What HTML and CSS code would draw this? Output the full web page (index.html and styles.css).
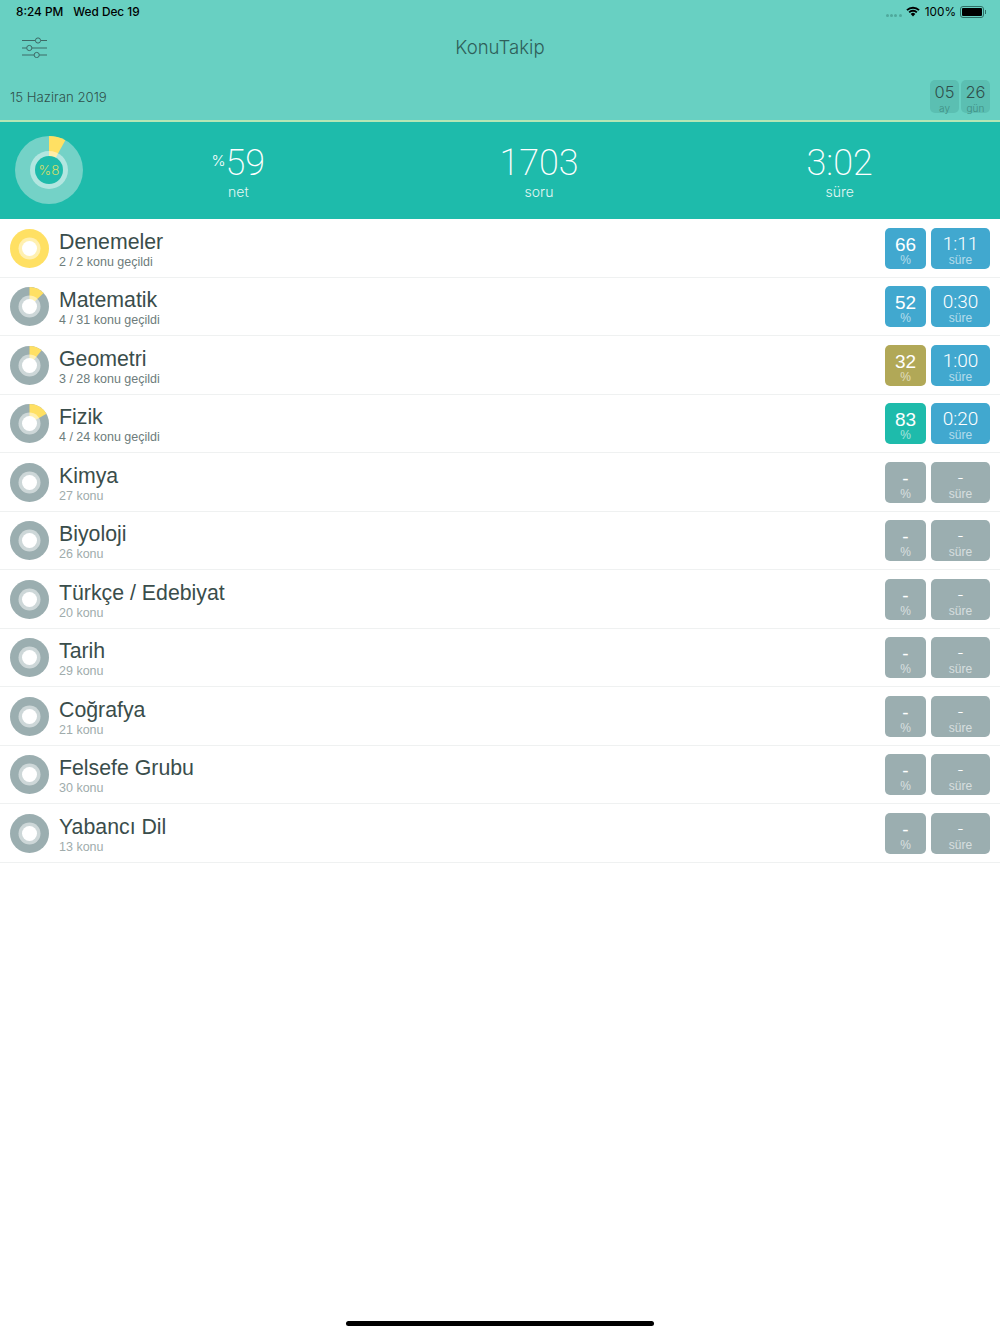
FILE: index.html
```html
<!DOCTYPE html>
<html lang="tr">
<head>
    <meta charset="UTF-8">
    <meta name="viewport" content="width=device-width, initial-scale=1.0">
    <title>KonuTakip</title>
    <link rel="stylesheet" href="styles.css">
</head>
<body>
    <header class="top">
        <div class="status">
            <span class="status-time">8:24 PM</span>
            <span class="status-date">Wed Dec 19</span>
            <span class="status-right">
                <span class="dots"><i></i><i></i><i></i><i></i></span>
                <svg class="wifi" width="14" height="11" viewBox="0 0 14 11">
                    <path d="M0.3 3.4A9.6 9.6 0 0 1 13.7 3.4L12.4 4.8A7.8 7.8 0 0 0 1.6 4.8Z"/>
                    <path d="M2.5 5.7A6.4 6.4 0 0 1 11.5 5.7L10.2 7A4.6 4.6 0 0 0 3.8 7Z"/>
                    <path d="M4.7 8A3.2 3.2 0 0 1 9.3 8L7 10.6Z"/>
                </svg>
                <span class="battery-text">100%</span>
                <span class="battery"><b></b></span><span class="battery-tip"></span>
            </span>
        </div>
        <div class="nav">
            <svg class="filter-icon" width="25" height="22" viewBox="0 0 25 22">
                <path d="M0 4.5H13.3M18.7 4.5H25M0 12H4.6M10 12H25M0 19H12M17.4 19H25"/>
                <circle cx="16" cy="4.5" r="2.6"/>
                <circle cx="7.3" cy="12" r="2.6"/>
                <circle cx="14.7" cy="19" r="2.6"/>
            </svg>
            <h1 class="app-title">KonuTakip</h1>
        </div>
        <div class="date-row">
            <span class="exam-date">15 Haziran 2019</span>
            <div class="countdown">
                <div class="count-box"><span class="count-num">05</span><span class="count-unit">ay</span></div>
                <div class="count-box"><span class="count-num">26</span><span class="count-unit">gün</span></div>
            </div>
        </div>
    </header>

    <section class="summary">
        <div class="summary-ring">
            <svg width="68" height="68" viewBox="0 0 68 68">
                <circle cx="34" cy="34" r="34" fill="#74d2c7"/>
                <circle cx="34" cy="34" r="17" fill="none" stroke="#ffe063" stroke-width="34" pathLength="100" stroke-dasharray="8 92" transform="rotate(-90 34 34)"/>
                <circle cx="34" cy="34" r="19" fill="#fff" fill-opacity="0.45"/>
                <circle cx="34" cy="34" r="14" fill="#1ebbab"/>
            </svg>
            <span class="summary-ring-text">%8</span>
        </div>
        <div class="stat"><div class="stat-num"><small>%</small>59</div><div class="stat-label">net</div></div>
        <div class="stat"><div class="stat-num">1703</div><div class="stat-label">soru</div></div>
        <div class="stat"><div class="stat-num">3:02</div><div class="stat-label">süre</div></div>
    </section>

    <ul class="lessons">
        <li class="lesson">
            <svg class="ring" width="39" height="39" viewBox="0.5 0.5 39 39">
                <circle cx="20" cy="20" r="19.5" fill="#ffe063"/>
                <circle class="ring-pale" cx="20" cy="20" r="11"/><circle class="ring-hole" cx="20" cy="20" r="7.5"/>
            </svg>
            <div class="lesson-text"><div class="lesson-name">Denemeler</div><div class="lesson-sub done">2 / 2 konu geçildi</div></div>
            <div class="badge pct blue"><span class="badge-num">66</span><span class="badge-unit">%</span></div>
            <div class="badge time blue"><span class="badge-num">1:11</span><span class="badge-unit">süre</span></div>
        </li>
        <li class="lesson">
            <svg class="ring" width="39" height="39" viewBox="0.5 0.5 39 39">
                <circle cx="20" cy="20" r="19.5" fill="#9baeb0"/>
                <circle class="ring-part" cx="20" cy="20" r="9.75" pathLength="100" stroke-dasharray="12.9 87.1" transform="rotate(-90 20 20)"/>
                <circle class="ring-pale" cx="20" cy="20" r="11"/><circle class="ring-hole" cx="20" cy="20" r="7.5"/>
            </svg>
            <div class="lesson-text"><div class="lesson-name">Matematik</div><div class="lesson-sub done">4 / 31 konu geçildi</div></div>
            <div class="badge pct blue"><span class="badge-num">52</span><span class="badge-unit">%</span></div>
            <div class="badge time blue"><span class="badge-num">0:30</span><span class="badge-unit">süre</span></div>
        </li>
        <li class="lesson">
            <svg class="ring" width="39" height="39" viewBox="0.5 0.5 39 39">
                <circle cx="20" cy="20" r="19.5" fill="#9baeb0"/>
                <circle class="ring-part" cx="20" cy="20" r="9.75" pathLength="100" stroke-dasharray="10.7 89.3" transform="rotate(-90 20 20)"/>
                <circle class="ring-pale" cx="20" cy="20" r="11"/><circle class="ring-hole" cx="20" cy="20" r="7.5"/>
            </svg>
            <div class="lesson-text"><div class="lesson-name">Geometri</div><div class="lesson-sub done">3 / 28 konu geçildi</div></div>
            <div class="badge pct gold"><span class="badge-num">32</span><span class="badge-unit">%</span></div>
            <div class="badge time blue"><span class="badge-num">1:00</span><span class="badge-unit">süre</span></div>
        </li>
        <li class="lesson">
            <svg class="ring" width="39" height="39" viewBox="0.5 0.5 39 39">
                <circle cx="20" cy="20" r="19.5" fill="#9baeb0"/>
                <circle class="ring-part" cx="20" cy="20" r="9.75" pathLength="100" stroke-dasharray="16.7 83.3" transform="rotate(-90 20 20)"/>
                <circle class="ring-pale" cx="20" cy="20" r="11"/><circle class="ring-hole" cx="20" cy="20" r="7.5"/>
            </svg>
            <div class="lesson-text"><div class="lesson-name">Fizik</div><div class="lesson-sub done">4 / 24 konu geçildi</div></div>
            <div class="badge pct teal"><span class="badge-num">83</span><span class="badge-unit">%</span></div>
            <div class="badge time blue"><span class="badge-num">0:20</span><span class="badge-unit">süre</span></div>
        </li>
        <li class="lesson">
            <svg class="ring" width="39" height="39" viewBox="0.5 0.5 39 39">
                <circle cx="20" cy="20" r="19.5" fill="#9baeb0"/>
                <circle class="ring-pale" cx="20" cy="20" r="11"/><circle class="ring-hole" cx="20" cy="20" r="7.5"/>
            </svg>
            <div class="lesson-text"><div class="lesson-name">Kimya</div><div class="lesson-sub">27 konu</div></div>
            <div class="badge pct"><span class="badge-num">-</span><span class="badge-unit">%</span></div>
            <div class="badge time"><span class="badge-num">-</span><span class="badge-unit">süre</span></div>
        </li>
        <li class="lesson">
            <svg class="ring" width="39" height="39" viewBox="0.5 0.5 39 39">
                <circle cx="20" cy="20" r="19.5" fill="#9baeb0"/>
                <circle class="ring-pale" cx="20" cy="20" r="11"/><circle class="ring-hole" cx="20" cy="20" r="7.5"/>
            </svg>
            <div class="lesson-text"><div class="lesson-name">Biyoloji</div><div class="lesson-sub">26 konu</div></div>
            <div class="badge pct"><span class="badge-num">-</span><span class="badge-unit">%</span></div>
            <div class="badge time"><span class="badge-num">-</span><span class="badge-unit">süre</span></div>
        </li>
        <li class="lesson">
            <svg class="ring" width="39" height="39" viewBox="0.5 0.5 39 39">
                <circle cx="20" cy="20" r="19.5" fill="#9baeb0"/>
                <circle class="ring-pale" cx="20" cy="20" r="11"/><circle class="ring-hole" cx="20" cy="20" r="7.5"/>
            </svg>
            <div class="lesson-text"><div class="lesson-name">Türkçe / Edebiyat</div><div class="lesson-sub">20 konu</div></div>
            <div class="badge pct"><span class="badge-num">-</span><span class="badge-unit">%</span></div>
            <div class="badge time"><span class="badge-num">-</span><span class="badge-unit">süre</span></div>
        </li>
        <li class="lesson">
            <svg class="ring" width="39" height="39" viewBox="0.5 0.5 39 39">
                <circle cx="20" cy="20" r="19.5" fill="#9baeb0"/>
                <circle class="ring-pale" cx="20" cy="20" r="11"/><circle class="ring-hole" cx="20" cy="20" r="7.5"/>
            </svg>
            <div class="lesson-text"><div class="lesson-name">Tarih</div><div class="lesson-sub">29 konu</div></div>
            <div class="badge pct"><span class="badge-num">-</span><span class="badge-unit">%</span></div>
            <div class="badge time"><span class="badge-num">-</span><span class="badge-unit">süre</span></div>
        </li>
        <li class="lesson">
            <svg class="ring" width="39" height="39" viewBox="0.5 0.5 39 39">
                <circle cx="20" cy="20" r="19.5" fill="#9baeb0"/>
                <circle class="ring-pale" cx="20" cy="20" r="11"/><circle class="ring-hole" cx="20" cy="20" r="7.5"/>
            </svg>
            <div class="lesson-text"><div class="lesson-name">Coğrafya</div><div class="lesson-sub">21 konu</div></div>
            <div class="badge pct"><span class="badge-num">-</span><span class="badge-unit">%</span></div>
            <div class="badge time"><span class="badge-num">-</span><span class="badge-unit">süre</span></div>
        </li>
        <li class="lesson">
            <svg class="ring" width="39" height="39" viewBox="0.5 0.5 39 39">
                <circle cx="20" cy="20" r="19.5" fill="#9baeb0"/>
                <circle class="ring-pale" cx="20" cy="20" r="11"/><circle class="ring-hole" cx="20" cy="20" r="7.5"/>
            </svg>
            <div class="lesson-text"><div class="lesson-name">Felsefe Grubu</div><div class="lesson-sub">30 konu</div></div>
            <div class="badge pct"><span class="badge-num">-</span><span class="badge-unit">%</span></div>
            <div class="badge time"><span class="badge-num">-</span><span class="badge-unit">süre</span></div>
        </li>
        <li class="lesson">
            <svg class="ring" width="39" height="39" viewBox="0.5 0.5 39 39">
                <circle cx="20" cy="20" r="19.5" fill="#9baeb0"/>
                <circle class="ring-pale" cx="20" cy="20" r="11"/><circle class="ring-hole" cx="20" cy="20" r="7.5"/>
            </svg>
            <div class="lesson-text"><div class="lesson-name">Yabancı Dil</div><div class="lesson-sub">13 konu</div></div>
            <div class="badge pct"><span class="badge-num">-</span><span class="badge-unit">%</span></div>
            <div class="badge time"><span class="badge-num">-</span><span class="badge-unit">süre</span></div>
        </li>
    </ul>

    <div class="home-indicator"></div>
</body>
</html>
```

FILE: styles.css
```css
* {
    box-sizing: border-box;
}
html, body {
    height: 100%;
}
body {
    margin: 0;
    height: 1334px;
    overflow: hidden;
    display: flex;
    flex-direction: column;
    background-color: #fff;
    font-family: "Liberation Sans", Arial, sans-serif;
    color: #2e4340;
}

/* top area */
.top {
    height: 122px;
    flex: none;
    background-color: #68d0c2;
    border-bottom: 2px solid #b5e6b5;
}
.status {
    height: 23px;
    display: flex;
    align-items: center;
    padding: 0 14px 0 16px;
    font-family: Inter, sans-serif;
    font-size: 11.8px;
    font-weight: 500;
    color: #000;
}
.status-date {
    margin-left: 10px;
}
.status-right {
    margin-left: auto;
    display: flex;
    align-items: center;
    font-weight: 400;
}
.dots {
    display: flex;
    gap: 1.3px;
    margin: 7px 4px 0 0;
}
.dots i {
    width: 3px;
    height: 3px;
    border-radius: 50%;
    background-color: #4fa99c;
}
.wifi {
    margin-right: 5px;
}
.battery {
    width: 24px;
    height: 12px;
    padding: 1px;
    margin-left: 4px;
    border: 1px solid #2f6f66;
    border-radius: 3px;
    display: flex;
}
.battery b {
    flex: 1;
    background-color: #000;
    border-radius: 1px;
}
.battery-tip {
    width: 1px;
    height: 4px;
    margin-left: 1px;
    background-color: #2f6f66;
}
.nav {
    height: 47px;
    display: flex;
    align-items: center;
    justify-content: center;
    position: relative;
}
.filter-icon {
    position: absolute;
    left: 22px;
    top: 13px;
    fill: none;
    stroke: #3d6a66;
    stroke-width: 1;
}
.app-title {
    margin: 0;
    font-family: Inter, sans-serif;
    font-size: 18.6px;
    font-weight: 300;
    color: #2f5f5a;
}
.date-row {
    display: flex;
    align-items: flex-start;
    justify-content: space-between;
    padding: 10px 10px 0;
}
.exam-date {
    margin-top: 9px;
    font-family: Inter, sans-serif;
    font-size: 13.2px;
    font-weight: 300;
    color: #30504c;
}
.countdown {
    display: flex;
    gap: 2px;
}
.count-box {
    width: 29px;
    height: 33px;
    border-radius: 5px;
    background-color: #5bbfb2;
    display: flex;
    flex-direction: column;
    align-items: center;
    padding-top: 1.5px;
}
.count-num {
    font-family: Inter, sans-serif;
    font-size: 16.5px;
    font-weight: 300;
    line-height: 20px;
    color: #30504c;
}
.count-unit {
    margin-top: 1px;
    font-family: Inter, sans-serif;
    font-size: 10px;
    font-weight: 300;
    line-height: 10px;
    color: #3f8d83;
}

/* summary band */
.summary {
    height: 97px;
    flex: none;
    display: flex;
    align-items: center;
    padding: 0 10px 0 15px;
    background-color: #1ebbab;
    color: #fff;
}
.summary-ring {
    width: 68px;
    height: 68px;
    margin-right: 5px;
    margin-top: -1px;
    flex: none;
    position: relative;
}
.summary-ring svg {
    display: block;
}
.summary-ring-text {
    position: absolute;
    inset: 0;
    display: flex;
    align-items: center;
    justify-content: center;
    font-family: Inter, sans-serif;
    font-size: 13.5px;
    font-weight: 300;
    color: #d6dd6a;
}
.stat {
    flex: 1;
    text-align: center;
}
.stat-num {
    padding-top: 3px;
    font-family: Roboto, sans-serif;
    font-size: 36px;
    font-weight: 200;
    line-height: 39px;
}
.stat-num small {
    font-family: Inter, sans-serif;
    font-size: 15px;
    font-weight: 300;
    line-height: 0;
    vertical-align: 9px;
}
.stat-label {
    font-family: Inter, sans-serif;
    font-size: 14px;
    font-weight: 300;
    line-height: 17px;
    color: #e4f7f4;
}

/* lesson rows */
.lessons {
    list-style: none;
    margin: 0;
    padding: 0;
}
.lesson {
    height: 58.5px;
    display: flex;
    align-items: center;
    padding: 1px 10px 0;
    border-bottom: 1px solid #eff1f1;
}
.ring {
    flex: none;
    margin-right: 10px;
}
.ring-part {
    fill: none;
    stroke: #ffe063;
    stroke-width: 19.5;
}
.ring-pale {
    fill: #fff;
    fill-opacity: 0.5;
}
.ring-hole {
    fill: #fff;
}
.lesson-text {
    flex: 1;
    padding-top: 3px;
}
.lesson-name {
    font-size: 21.3px;
    line-height: 25px;
    color: #3a4d4b;
}
.lesson-sub {
    font-size: 12.5px;
    line-height: 15px;
    color: #a0acac;
}
.lesson-sub.done {
    color: #6d7c7b;
}
.badge {
    height: 41px;
    border-radius: 5px;
    display: flex;
    flex-direction: column;
    align-items: center;
    padding-top: 6px;
    background-color: #9baeb0;
    color: #fff;
}
.badge.blue {
    background-color: #41a8cf;
}
.badge.gold {
    background-color: #b1a857;
}
.badge.teal {
    background-color: #1ebbab;
}
.pct {
    width: 41px;
    margin-right: 5px;
}
.time {
    width: 59px;
}
.badge-num {
    font-size: 19px;
    line-height: 21px;
}
.time .badge-num {
    margin: -1px 0 1px;
    font-family: Roboto, sans-serif;
    font-size: 19px;
    font-weight: 300;
}
.badge-unit {
    font-size: 12px;
    line-height: 11px;
    opacity: 0.6;
}

.home-indicator {
    width: 308px;
    height: 5px;
    margin: auto auto 8px;
    border-radius: 3px;
    background-color: #000;
}
```
